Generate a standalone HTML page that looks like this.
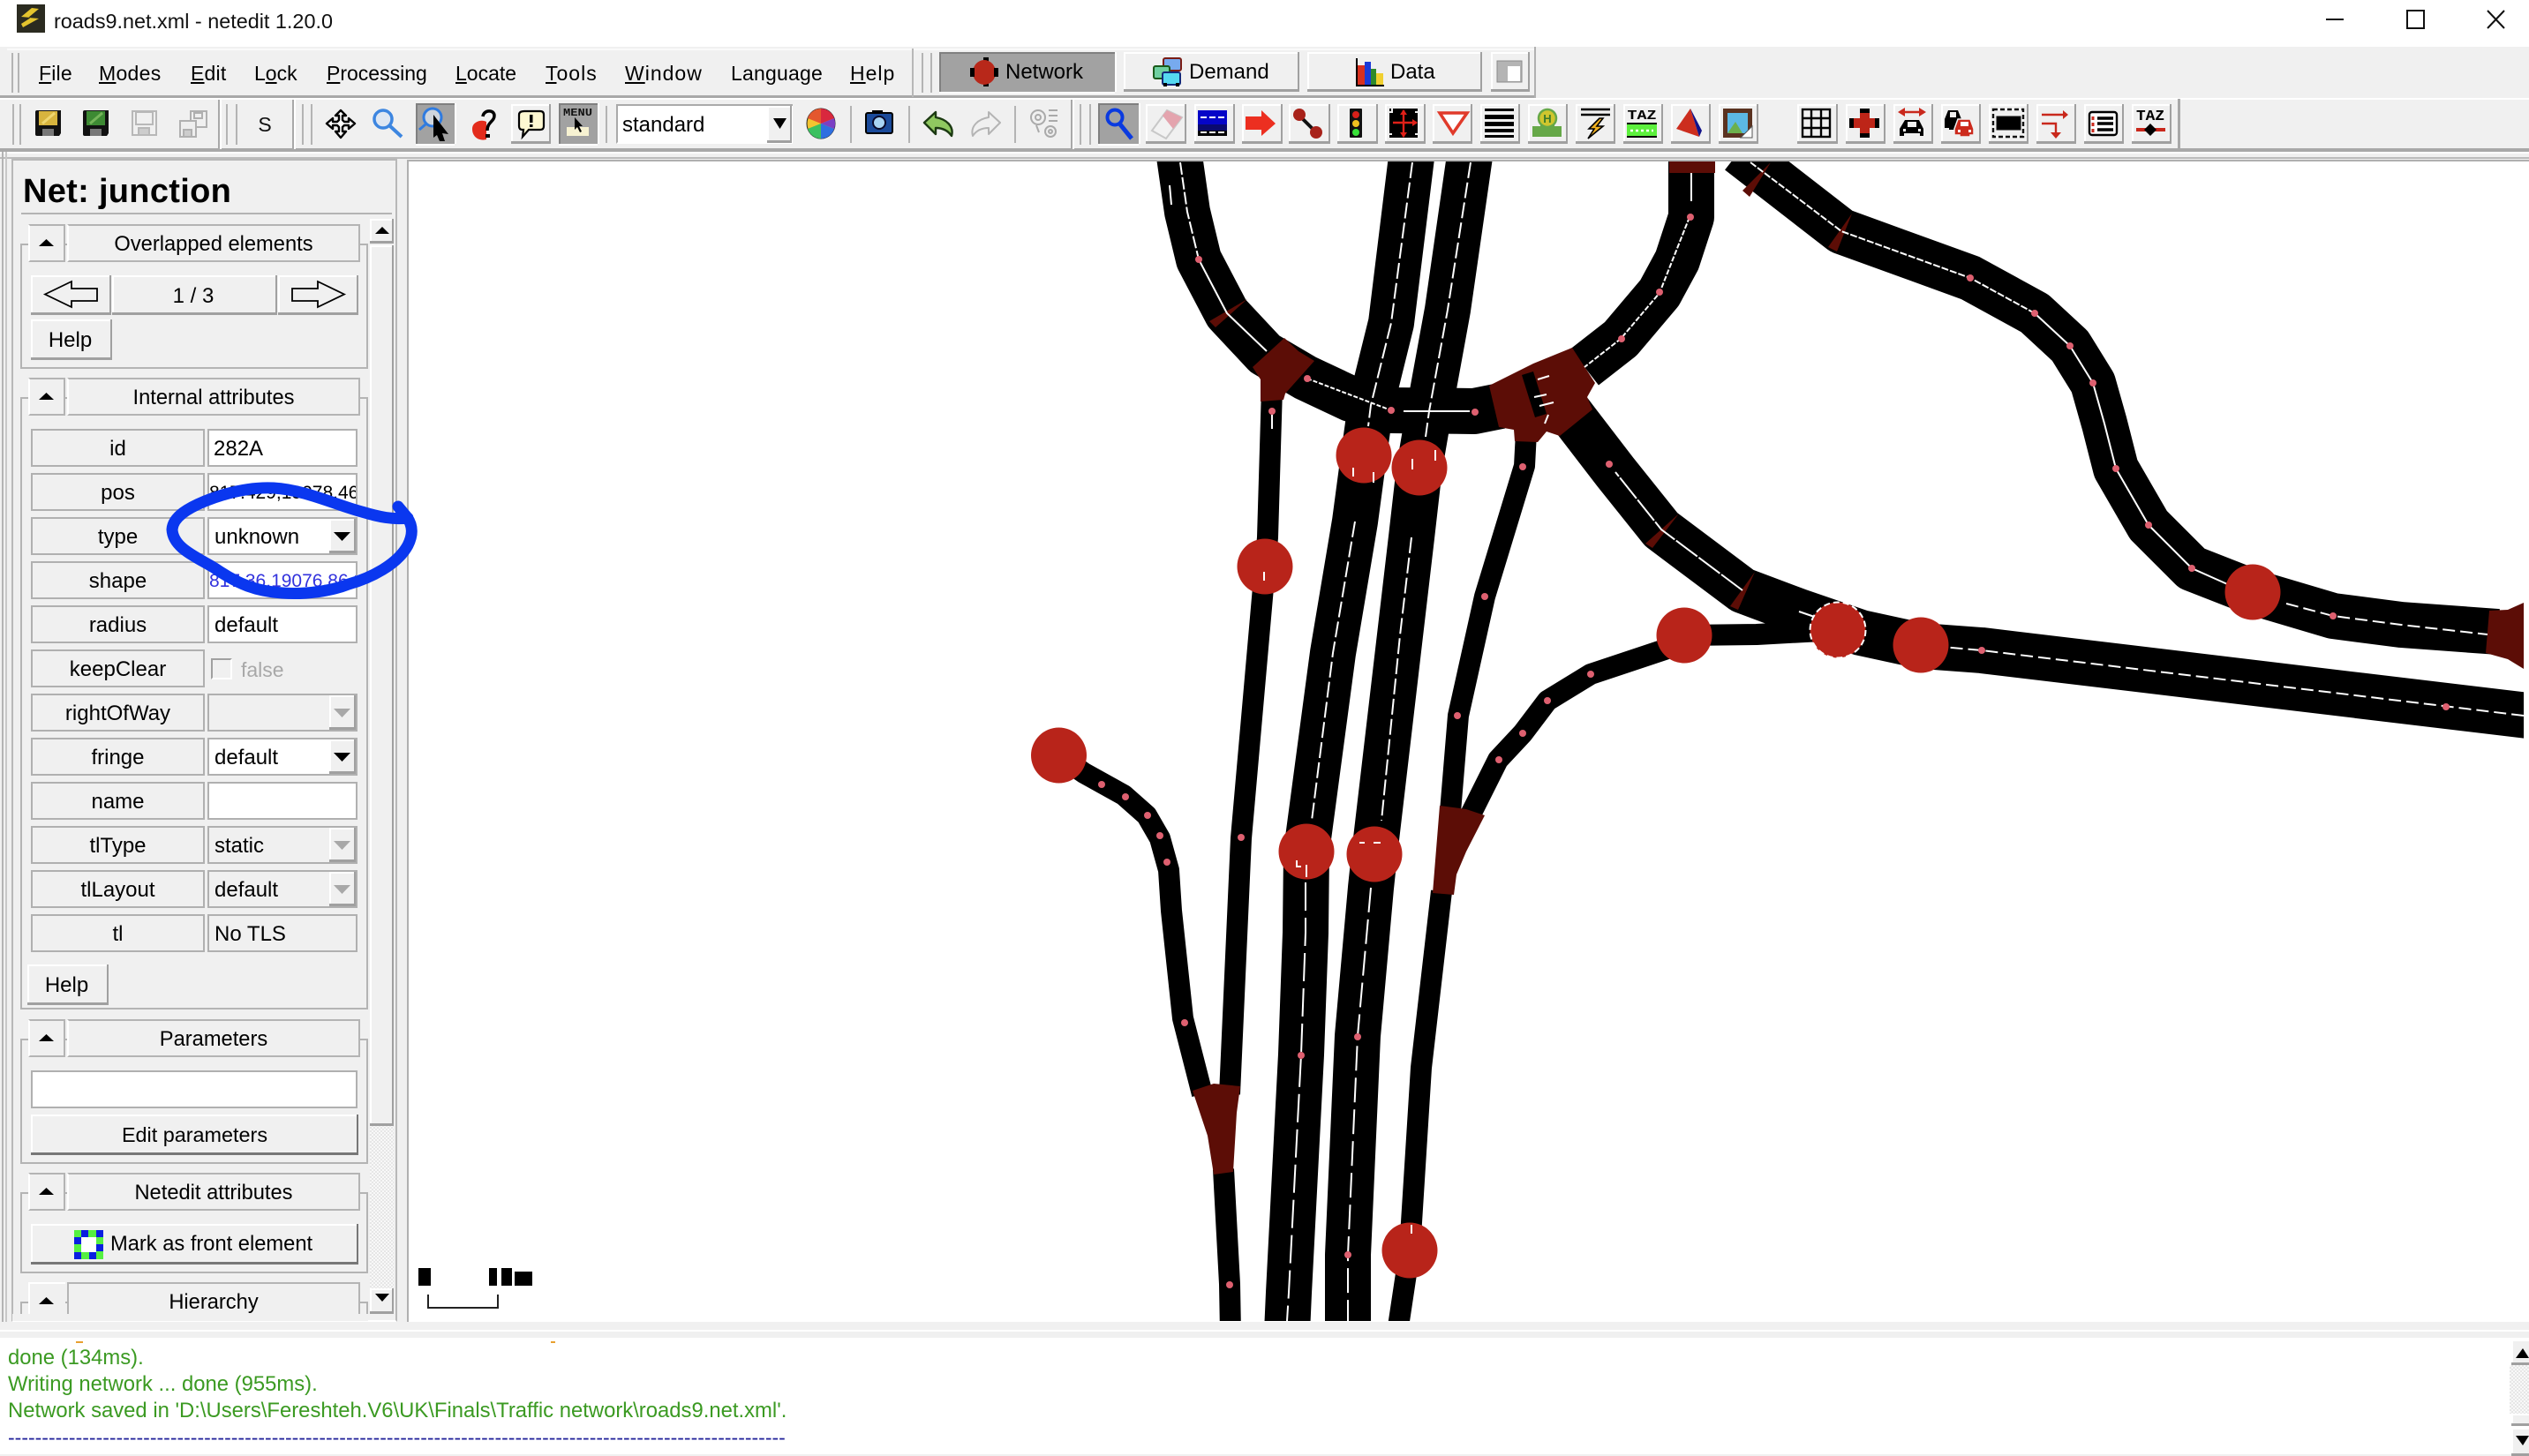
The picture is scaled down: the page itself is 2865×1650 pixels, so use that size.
<!DOCTYPE html>
<html><head><meta charset="utf-8"><title>roads9.net.xml - netedit 1.20.0</title>
<style>
html,body{margin:0;padding:0;width:2865px;height:1648px;overflow:hidden;background:#f0f0f0;font-family:"Liberation Sans",sans-serif;font-size:24px;color:#000}
.a{position:absolute;box-sizing:border-box;white-space:nowrap}
.b{position:absolute;box-sizing:border-box;background:#f0f0f0;box-shadow:inset -2px -3px 0 #a0a0a0,inset 2px 2px 0 #fff;text-align:center;white-space:nowrap}
.p{position:absolute;box-sizing:border-box;background:#a2a2a2;box-shadow:inset 2px 2px 0 #808080,0 2px 0 #fff,2px 0 0 #fff}
.h{position:absolute;box-sizing:border-box;background:#f0f0f0;border:2px solid #b4b4b4;border-left-color:#fff;border-top-color:#b4b4b4;text-align:center;white-space:nowrap;line-height:42px;font-size:23.7px}
.f{position:absolute;box-sizing:border-box;border:2px solid #b4b4b4;left:23px;width:394px}
.l{position:absolute;box-sizing:border-box;left:35px;width:197px;height:43px;border:2px solid #b0b0b0;text-align:center;line-height:42px;background:#f0f0f0}
.v{position:absolute;box-sizing:border-box;left:235px;width:170px;height:43px;border:2px solid #b0b0b0;padding-left:6px;line-height:42px;overflow:hidden;white-space:nowrap;background:#fff}
.g{background:#f0f0f0}
.m{position:absolute;top:68px;line-height:30px;font-size:23px}
.ln{position:absolute;background:#a8a8a8}
.log{position:absolute;left:9px;color:#3b9a22;line-height:30px;white-space:nowrap;font-size:23.85px}
</style></head><body>

<!-- title bar -->
<div class="a" style="left:0;top:0;width:2865px;height:53px;background:#fff"></div>
<div class="a" style="left:61px;top:8px;line-height:32px;font-size:23.4px;color:#111">roads9.net.xml - netedit 1.20.0</div>

<!-- toolbar lines -->
<div class="a" style="left:8px;top:55px;width:1730px;height:2px;background:#fafafa"></div>
<div class="ln" style="left:0;top:108px;width:1738px;height:3px"></div>
<div class="a" style="left:0;top:111px;width:2865px;height:2px;background:#fff"></div>
<div class="a" style="left:1738px;top:53px;width:2px;height:58px;background:#b0b0b0"></div>
<div class="ln" style="left:0;top:168px;width:2865px;height:4px"></div>
<div class="a" style="left:0;top:172px;width:2865px;height:2px;background:#fff"></div>
<div class="ln" style="left:0;top:178px;width:2865px;height:2px;background:#bbb"></div>
<div class="a" style="left:1033px;top:55px;width:2px;height:55px;background:#b8b8b8"></div>
<div class="a" style="left:247px;top:113px;width:2px;height:56px;background:#a8a8a8"></div>
<div class="a" style="left:249px;top:113px;width:2px;height:56px;background:#fff"></div>
<div class="a" style="left:331px;top:113px;width:2px;height:56px;background:#a8a8a8"></div>
<div class="a" style="left:333px;top:113px;width:2px;height:56px;background:#fff"></div>
<div class="a" style="left:1213px;top:113px;width:2px;height:56px;background:#a8a8a8"></div>
<div class="a" style="left:1215px;top:113px;width:2px;height:56px;background:#fff"></div>
<div class="a" style="left:2467px;top:112px;width:3px;height:57px;background:#a8a8a8"></div>
<div class="a" style="left:1215px;top:111px;width:1252px;height:2px;background:#fff"></div>

<!-- menu -->
<div class="m" style="left:44px;letter-spacing:.2px"><u>F</u>ile</div>
<div class="m" style="left:112px;letter-spacing:.3px"><u>M</u>odes</div>
<div class="m" style="left:216px;letter-spacing:.2px"><u>E</u>dit</div>
<div class="m" style="left:288px">L<u>o</u>ck</div>
<div class="m" style="left:370px"><u>P</u>rocessing</div>
<div class="m" style="left:516px"><u>L</u>ocate</div>
<div class="m" style="left:618px;letter-spacing:1px"><u>T</u>ools</div>
<div class="m" style="left:708px;letter-spacing:1px"><u>W</u>indow</div>
<div class="m" style="left:828px;letter-spacing:.2px">Language</div>
<div class="m" style="left:963px;letter-spacing:1px"><u>H</u>elp</div>

<!-- mode buttons -->
<div class="p" style="left:1064px;top:59px;width:199px;height:45px"></div>
<div class="a" style="left:1139px;top:67px;line-height:30px">Network</div>
<div class="b" style="left:1273px;top:59px;width:199px;height:45px"></div>
<div class="a" style="left:1347px;top:67px;line-height:30px">Demand</div>
<div class="b" style="left:1481px;top:59px;width:198px;height:45px"></div>
<div class="a" style="left:1575px;top:67px;line-height:30px">Data</div>
<div class="b" style="left:1689px;top:59px;width:44px;height:45px"></div>

<!-- second row buttons -->
<div class="p" style="left:471px;top:117px;width:44px;height:46px"></div>
<div class="b" style="left:579px;top:118px;width:45px;height:45px"></div>
<div class="p" style="left:633px;top:117px;width:44px;height:46px"></div>
<div class="a" style="left:698px;top:118px;width:200px;height:45px;background:#fff;border:2px solid #aaa;border-right:none;border-bottom-color:#fff;line-height:43px;padding-left:5px;font-size:24px">standard</div>
<div class="b" style="left:869px;top:120px;width:28px;height:42px"></div>
<div class="a" style="left:963px;top:120px;width:2px;height:42px;background:#b4b4b4"></div>
<div class="a" style="left:1029px;top:120px;width:2px;height:42px;background:#b4b4b4"></div>
<div class="a" style="left:1149px;top:120px;width:2px;height:42px;background:#b4b4b4"></div>
<div class="a" style="left:686px;top:120px;width:2px;height:42px;background:#b4b4b4"></div>
<div class="p" style="left:1244px;top:117px;width:46px;height:46px"></div>
<div class="b" style="left:1298px;top:118px;width:46px;height:45px"></div>
<div class="b" style="left:1353px;top:118px;width:46px;height:45px"></div>
<div class="b" style="left:1407px;top:118px;width:46px;height:45px"></div>
<div class="b" style="left:1460px;top:118px;width:47px;height:45px"></div>
<div class="b" style="left:1515px;top:118px;width:46px;height:45px"></div>
<div class="b" style="left:1569px;top:118px;width:46px;height:45px"></div>
<div class="b" style="left:1623px;top:118px;width:45px;height:45px"></div>
<div class="b" style="left:1677px;top:118px;width:45px;height:45px"></div>
<div class="b" style="left:1731px;top:118px;width:45px;height:45px"></div>
<div class="b" style="left:1785px;top:118px;width:45px;height:45px"></div>
<div class="b" style="left:1839px;top:118px;width:45px;height:45px"></div>
<div class="b" style="left:1893px;top:118px;width:45px;height:45px"></div>
<div class="b" style="left:1947px;top:118px;width:45px;height:45px"></div>
<div class="b" style="left:2036px;top:118px;width:46px;height:45px"></div>
<div class="b" style="left:2091px;top:118px;width:45px;height:45px"></div>
<div class="b" style="left:2145px;top:118px;width:45px;height:45px"></div>
<div class="b" style="left:2199px;top:118px;width:45px;height:45px"></div>
<div class="b" style="left:2253px;top:118px;width:45px;height:45px"></div>
<div class="b" style="left:2307px;top:118px;width:45px;height:45px"></div>
<div class="b" style="left:2361px;top:118px;width:45px;height:45px"></div>
<div class="b" style="left:2415px;top:118px;width:45px;height:45px"></div>

<!-- side panel frames -->
<div class="a" style="left:2px;top:172px;width:2px;height:1336px;background:#b4b4b4"></div>
<div class="a" style="left:6px;top:172px;width:2px;height:1336px;background:#c8c8c8"></div>
<div class="a" style="left:13px;top:180px;width:437px;height:1318px;border:2px solid #b8b8b8;border-bottom:2px solid #fff"></div>
<div class="a" style="left:461px;top:181px;width:2404px;height:1317px;background:#fff;border-left:2px solid #b0b0b0;border-top:2px solid #b0b0b0"></div>
<div class="a" style="left:26px;top:192px;line-height:50px;font-size:38px;font-weight:bold;letter-spacing:.3px">Net: junction</div>
<div class="a" style="left:24px;top:241px;width:420px;height:2px;background:#b4b4b4"></div>

<!-- scrollbar -->
<div class="a" style="left:419px;top:1275px;width:27px;height:185px;background:repeating-conic-gradient(#e6e6e6 0 25%,#f8f8f8 0 50%) 0 0/4px 4px"></div>
<div class="b" style="left:419px;top:248px;width:27px;height:28px"></div>
<div class="b" style="left:419px;top:278px;width:27px;height:998px"></div>
<div class="b" style="left:419px;top:1460px;width:27px;height:29px"></div>

<!-- section 1 -->
<div class="f" style="top:276px;height:142px"></div>
<div class="h" style="left:32px;top:254px;width:42px;height:43px"></div>
<div class="h" style="left:76px;top:254px;width:332px;height:43px">Overlapped elements</div>
<div class="b" style="left:35px;top:312px;width:91px;height:45px"></div>
<div class="b" style="left:127px;top:312px;width:187px;height:45px;line-height:47px;padding-right:3px">1 / 3</div>
<div class="b" style="left:315px;top:312px;width:91px;height:45px"></div>
<div class="b" style="left:35px;top:362px;width:92px;height:46px;line-height:47px;padding-right:3px">Help</div>

<!-- section 2 -->
<div class="f" style="top:450px;height:694px"></div>
<div class="h" style="left:32px;top:428px;width:42px;height:43px"></div>
<div class="h" style="left:76px;top:428px;width:332px;height:43px">Internal attributes</div>

<div class="l" style="top:486px">id</div><div class="v" style="top:486px;padding-left:5px">282A</div>
<div class="l" style="top:536px">pos</div><div class="v" style="top:536px;padding-left:0;font-size:21px">817.429,19078.46</div>
<div class="l" style="top:586px">type</div><div class="v" style="top:586px">unknown</div><div class="b" style="left:373px;top:588px;width:30px;height:39px"></div>
<div class="l" style="top:636px">shape</div><div class="v" style="top:636px;padding-left:0;font-size:21px;color:#3333dd">817.36,19076.86 817.40</div>
<div class="l" style="top:686px">radius</div><div class="v" style="top:686px">default</div>
<div class="l" style="top:736px">keepClear</div>
<div class="a" style="left:239px;top:746px;width:24px;height:24px;border:2px solid #a0a0a0;border-right-color:#fff;border-bottom-color:#fff"></div>
<div class="a" style="left:273px;top:744px;line-height:30px;color:#a8a8a8;font-size:23px">false</div>
<div class="l" style="top:786px">rightOfWay</div><div class="v g" style="top:786px"></div><div class="b" style="left:373px;top:788px;width:30px;height:39px"></div>
<div class="l" style="top:836px">fringe</div><div class="v" style="top:836px">default</div><div class="b" style="left:373px;top:838px;width:30px;height:39px"></div>
<div class="l" style="top:886px">name</div><div class="v" style="top:886px"></div>
<div class="l" style="top:936px">tlType</div><div class="v g" style="top:936px">static</div><div class="b" style="left:373px;top:938px;width:30px;height:39px"></div>
<div class="l" style="top:986px">tlLayout</div><div class="v g" style="top:986px">default</div><div class="b" style="left:373px;top:988px;width:30px;height:39px"></div>
<div class="l" style="top:1036px">tl</div><div class="v g" style="top:1036px">No TLS</div>
<div class="b" style="left:31px;top:1093px;width:92px;height:46px;line-height:47px;padding-right:3px">Help</div>

<!-- section 3 -->
<div class="f" style="top:1177px;height:142px"></div>
<div class="h" style="left:32px;top:1155px;width:42px;height:43px"></div>
<div class="h" style="left:76px;top:1155px;width:332px;height:43px;line-height:43px">Parameters</div>
<div class="a" style="left:35px;top:1213px;width:370px;height:43px;background:#fff;border:2px solid #b0b0b0"></div>
<div class="b" style="left:35px;top:1263px;width:371px;height:46px;line-height:47px;font-size:23.4px;box-shadow:inset -2px -3px 0 #777,inset 2px 2px 0 #fff">Edit parameters</div>

<!-- section 4 -->
<div class="f" style="top:1351px;height:92px"></div>
<div class="h" style="left:32px;top:1329px;width:42px;height:43px"></div>
<div class="h" style="left:76px;top:1329px;width:332px;height:43px;line-height:43px">Netedit attributes</div>
<div class="b" style="left:35px;top:1387px;width:371px;height:46px;line-height:47px;font-size:23.7px;box-shadow:inset -2px -3px 0 #777,inset 2px 2px 0 #fff;text-align:left;padding-left:90px">Mark as front element</div>

<!-- section 5 -->
<div class="a" style="left:23px;top:1475px;width:394px;height:14px;border:2px solid #b4b4b4;border-bottom:none"></div>
<div class="a" style="left:32px;top:1453px;width:42px;height:36px;background:#f0f0f0;border-top:2px solid #fff;border-left:2px solid #fff"></div>
<div class="a" style="left:76px;top:1453px;width:332px;height:36px;background:#f0f0f0;border:2px solid #b4b4b4;border-bottom:none;text-align:center;line-height:43px;font-size:23.7px">Hierarchy</div>
<div class="a" style="left:14px;top:1489px;width:403px;height:8px;background:#f0f0f0"></div>

<!-- bottom sep and log -->
<div class="a" style="left:0;top:1498px;width:2865px;height:18px;background:#f0f0f0"></div>
<div class="a" style="left:0;top:1507px;width:2865px;height:2px;background:#fff"></div>
<div class="a" style="left:0;top:1516px;width:2865px;height:132px;background:#fff"></div>
<div class="log" style="top:1524px">done (134ms).</div>
<div class="log" style="top:1554px">Writing network ... done (955ms).</div>
<div class="log" style="top:1584px">Network saved in 'D:\Users\Fereshteh.V6\UK\Finals\Traffic network\roads9.net.xml'.</div>
<div class="log" style="top:1614px;color:#22229a;font-size:23px">-------------------------------------------------------------------------------------------------------------------</div>
<div class="a" style="left:86px;top:1520px;width:8px;height:2px;background:#e8a030"></div>
<div class="a" style="left:624px;top:1520px;width:5px;height:2px;background:#e8a030"></div>
<div class="a" style="left:2843px;top:1547px;width:22px;height:55px;background:repeating-conic-gradient(#e6e6e6 0 25%,#f8f8f8 0 50%) 0 0/4px 4px"></div>
<div class="b" style="left:2845px;top:1518px;width:22px;height:29px"></div>
<div class="b" style="left:2845px;top:1602px;width:22px;height:14px"></div>
<div class="b" style="left:2845px;top:1618px;width:22px;height:32px"></div>

<!-- overlay: roads, icons, annotation -->
<svg class="a" style="left:0;top:0" width="2865" height="1648" viewBox="0 0 2865 1648">
<defs><clipPath id="cv"><rect x="463" y="183" width="2396" height="1314"/></clipPath></defs>

<!-- canvas -->
<g clip-path="url(#cv)">
 <g fill="none" stroke="#000" stroke-linejoin="round">
  <g stroke-width="52">
   <path d="M2880 813L2245 737 2177 732 2108 717 2038 693 1974 669 1882 600 1830 535 1787 479 1765 450"/>
   <path d="M1970 172L2086 262 2232 315 2305 355 2345 392 2371 434 2384 480 2397 531 2434 595 2483 644 2552 671 2643 698 2720 708 2830 716"/>
   <path d="M1335 170L1345 240 1358 294 1390 355 1433 401 1479 428 1530 452 1576 465 1670 466 1700 460"/>
   <path d="M1916 170L1916 246 1900 295 1880 332 1836 384 1795 416"/>
   <path d="M1600 170L1576 366 1553 459 1545 516 1535 591 1510 740 1480 965 1479 1057 1474 1195 1460 1465 1458 1510"/>
   <path d="M1666 170L1640 351 1619 466 1608 530 1599 609 1586 720 1557 968 1553 1006 1538 1174 1527 1422 1527 1510"/>
  </g>
  <g stroke-width="24">
   <path d="M1441 440L1436 609 1428 700 1406 950 1393 1240"/>
   <path d="M1386 1325L1393 1455 1394 1510"/>
   <path d="M1199 856L1228 876 1273 901 1299 924 1314 950 1324 986 1327 1032 1340 1154 1362 1240"/>
   <path d="M1729 490L1727 528 1682 676 1652 811 1643 920"/>
   <path d="M1633 1010L1610 1210 1597 1417 1583 1510"/>
   <path d="M1665 925L1697 861 1725 831 1753 794 1802 764 1886 736 1908 720 1990 719 2082 714"/>
  </g>
 </g>
 <g fill="#5c0d06">
  <polygon points="1455,383 1471,398 1489,409 1456,446 1454,453 1428,455 1428,430 1419,416"/>
  <polygon points="1687,437 1737,412 1781,394 1807,434 1798,450 1804,464 1767,494 1752,489 1742,501 1716,500 1715,487 1698,484"/>
  <polygon points="1351,1236 1375,1228 1405,1231 1401,1261 1397,1328 1375,1331 1368,1287"/>
  <polygon points="1631,913 1661,917 1682,924 1661,965 1650,991 1647,1014 1623,1012"/>
  <rect x="1891" y="183" width="52" height="13"/>
  <polygon points="2820,692 2841,691 2859,683 2859,758 2841,747 2816,740"/>
  <polygon points="1413,339 1370,364 1377,371"/>
  <polygon points="1902,582 1864,616 1872,621"/>
  <polygon points="2006,184 1974,216 1982,223"/>
  <polygon points="2098,242 2071,280 2081,285"/>
  <polygon points="1988,648 1960,687 1969,691"/>
 </g>
 <polygon points="1724,425 1737,421 1752,469 1739,473" fill="#000"/>
 <g fill="none" stroke="#fff" stroke-width="2">
  <path stroke-dasharray="14 6" d="M2859 811L2245 737 2177 731"/>
  <path d="M2108 717L2038 693"/>
  <path stroke-dasharray="30 2" d="M1974 669L1882 600 1830 535"/>
  <path stroke-dasharray="8 2" d="M1983 184L2086 262 2232 315 2305 355"/>
  <path d="M2305 355L2345 392 2371 434 2384 480 2397 531 2434 595 2483 644 2530 665"/>
  <path stroke-dasharray="14 6" d="M2590 684L2643 698 2720 708 2818 719"/>
  <path stroke-dasharray="14 3" d="M1337 184L1345 240 1358 294"/>
  <path d="M1358 294L1390 355 1435 398"/>
  <path stroke-dasharray="5 2" d="M1481 429L1576 465"/>
  <path d="M1590 466L1665 466"/>
  <path d="M1916 196L1916 228"/>
  <path stroke-dasharray="6 2" d="M1914 246L1880 332 1836 384 1795 416"/>
  <path stroke-dasharray="18 5" d="M1600 184L1576 366 1553 459 1550 483"/>
  <path stroke-dasharray="18 5" d="M1535 591L1510 740 1486 930"/>
  <path stroke-dasharray="32 8" d="M1479 1000L1479 1057 1474 1195 1460 1465 1458 1497"/>
  <path stroke-dasharray="18 5" d="M1666 184L1640 351 1619 466 1615 495"/>
  <path stroke-dasharray="18 5" d="M1599 609L1586 720 1565 930"/>
  <path stroke-dasharray="28 8" d="M1553 1006L1538 1174 1527 1422 1527 1497"/>
  <path d="M1742 430L1755 426M1738 450L1752 447M1744 460L1760 456M1754 470L1750 480M1325 210L1327 232M1441 470L1441 486"/>
 </g>
 <g fill="#b8241a">
  <circle cx="1545" cy="516" r="31.5"/><circle cx="1608" cy="530" r="31.5"/>
  <circle cx="1433" cy="642" r="31.5"/><circle cx="1199.5" cy="856" r="31.5"/>
  <circle cx="1480" cy="965" r="31.5"/><circle cx="1557" cy="968" r="31.5"/>
  <circle cx="1597" cy="1417" r="31.5"/><circle cx="1908" cy="720" r="31.5"/>
  <circle cx="2082" cy="714" r="31.5" stroke="#fff" stroke-width="2" stroke-dasharray="7 4"/><circle cx="2176" cy="731" r="31.5"/>
  <circle cx="2552" cy="671" r="31.5"/>
 </g>
 <g fill="none" stroke="#fff" stroke-width="2">
  <path d="M1480 980V994M1469 975V982h5M1600 520v12M1626 510v12M1533 530v10M1556 535v12M1432 648v10M1599 1388v10M1556 955h8M1540 955h6"/>
 </g>
 <g fill="#de6070">
  <circle cx="1358" cy="294" r="4"/><circle cx="1481" cy="429" r="4"/><circle cx="1441" cy="466" r="4"/>
  <circle cx="1576" cy="465" r="4"/><circle cx="1671" cy="467" r="4"/><circle cx="1915" cy="246" r="4"/>
  <circle cx="1880" cy="331" r="4"/><circle cx="1837" cy="384" r="4"/><circle cx="1725" cy="529" r="4"/>
  <circle cx="1823" cy="526" r="4"/><circle cx="1682" cy="676" r="4"/><circle cx="1248" cy="889" r="4"/>
  <circle cx="1275" cy="903" r="4"/><circle cx="1300" cy="924" r="4"/><circle cx="1314" cy="947" r="4"/>
  <circle cx="1322" cy="977" r="4"/><circle cx="1406" cy="949" r="4"/><circle cx="1342" cy="1159" r="4"/>
  <circle cx="1474" cy="1196" r="4"/><circle cx="1538" cy="1175" r="4"/><circle cx="1527" cy="1422" r="4"/>
  <circle cx="1393" cy="1456" r="4"/><circle cx="1651" cy="811" r="4"/><circle cx="1698" cy="861" r="4"/>
  <circle cx="1725" cy="831" r="4"/><circle cx="1753" cy="794" r="4"/><circle cx="1802" cy="764" r="4"/>
  <circle cx="2232" cy="315" r="4"/><circle cx="2305" cy="355" r="4"/><circle cx="2345" cy="392" r="4"/>
  <circle cx="2371" cy="434" r="4"/><circle cx="2397" cy="531" r="4"/><circle cx="2434" cy="595" r="4"/>
  <circle cx="2483" cy="644" r="4"/><circle cx="2643" cy="698" r="4"/><circle cx="2245" cy="737" r="4"/>
  <circle cx="2771" cy="801" r="4"/>
 </g>
</g>

<!-- scale -->
<g fill="#000">
 <rect x="474" y="1437" width="14" height="20"/><rect x="554" y="1437" width="9" height="20"/>
 <rect x="568" y="1437" width="12" height="20"/><rect x="583" y="1441" width="20" height="16"/>
</g>
<path d="M485 1467V1482H564V1467" fill="none" stroke="#222" stroke-width="2"/>

<!-- window controls -->
<path d="M2635 22H2655" stroke="#111" stroke-width="2"/>
<rect x="2727" y="12" width="19" height="20" fill="none" stroke="#111" stroke-width="2"/>
<path d="M2818 12L2837 32M2837 12L2818 32" stroke="#111" stroke-width="2"/>

<!-- app icon -->
<rect x="19" y="5" width="32" height="32" fill="#2b2b20"/>
<path d="M26 31L44 21 32 20 44 10 36 9 24 19 35 20 24 27Z" fill="#e4c42e"/>

<!-- grips -->
<g stroke="#b4b4b4" stroke-width="2" fill="none">
 <path d="M14 60V105M21 60V105M15 118V164M23 118V164M257 118V164M268 118V164M343 118V164M353 118V164M1045 60V105M1055 60V105M1224 118V164M1235 118V164"/>
</g>

<!-- row1 icons -->
<g>
 <path d="M1108 72h6v-7h6v7h4v20h-4v6h-6v-6h-6z" fill="#000"/>
 <ellipse cx="1115" cy="82" rx="13" ry="14" fill="#b8281a"/>
 <rect x="1099" y="77" width="5" height="10" fill="#000"/><rect x="1126" y="77" width="5" height="10" fill="#000"/>
</g>
<g>
 <rect x="1318" y="66" width="20" height="14" rx="2" fill="#7ae" stroke="#7a1c14" stroke-width="2"/>
 <rect x="1307" y="75" width="18" height="14" rx="2" fill="#6fd0a0" stroke="#1a5a1a" stroke-width="2"/>
 <rect x="1317" y="82" width="20" height="14" rx="2" fill="#55d8f0" stroke="#122a7a" stroke-width="2"/>
 <rect x="1318" y="94" width="4" height="4" fill="#000"/><rect x="1332" y="94" width="4" height="4" fill="#000"/>
</g>
<g>
 <path d="M1537 66V97H1568" fill="none" stroke="#000" stroke-width="2"/>
 <rect x="1538" y="74" width="8" height="22" fill="#d8301f"/><rect x="1546" y="70" width="7" height="26" fill="#1a3ad8"/>
 <rect x="1553" y="78" width="6" height="18" fill="#2e8a2a"/><rect x="1559" y="83" width="8" height="13" fill="#f0d030"/>
</g>
<rect x="1696" y="69" width="28" height="24" fill="#b4b4b4" stroke="#8a8a8a" stroke-width="1"/>
<rect x="1708" y="75" width="14" height="17" fill="#fff"/>

<!-- save icons -->
<g transform="translate(40,125)">
 <path d="M0 2Q0 0 2 0H29V26L27 29H2Q0 29 0 27Z" fill="#111"/><rect x="4" y="1" width="21" height="16" fill="#d7b43e"/><path d="M8 15L22 3" stroke="#eed670" stroke-width="3"/><rect x="8" y="21" width="13" height="8" fill="#777"/>
</g>
<g transform="translate(94,125)">
 <path d="M0 2Q0 0 2 0H29V26L27 29H2Q0 29 0 27Z" fill="#111"/><rect x="4" y="1" width="21" height="16" fill="#3d8a33"/><path d="M8 15L22 3" stroke="#75b55a" stroke-width="3"/><rect x="8" y="21" width="13" height="8" fill="#777"/>
</g>
<g transform="translate(149,125)" fill="none" stroke="#b8b8b8" stroke-width="2">
 <rect x="1" y="1" width="27" height="27"/><rect x="5" y="2" width="19" height="14"/><rect x="8" y="20" width="12" height="8" fill="#ccc"/>
</g>
<g transform="translate(203,125)" fill="none" stroke="#b0b0b0" stroke-width="2">
 <rect x="13" y="1" width="18" height="18"/><rect x="1" y="12" width="18" height="18" fill="#eee"/><rect x="5" y="22" width="9" height="8" fill="#ccc"/><rect x="17" y="3" width="9" height="6"/>
</g>
<text x="300" y="149" font-family="Liberation Sans" font-size="23" text-anchor="middle" fill="#111">S</text>

<!-- recenter -->
<g transform="translate(386,140)" fill="#fff" stroke="#000" stroke-width="2.4" stroke-linejoin="round">
 <path d="M0 -15L-6 -9H-2V-4L-4 -2 -9 -2V-6L-16 0 -9 6V2H-4L-2 4V9H-6L0 16 6 9H2V4L4 2H9V6L16 0 9 -6V-2H4L2 -4V-9H6Z"/>
</g>
<!-- magnifier -->
<g fill="none">
 <circle cx="434" cy="135" r="10" fill="#dfe7f2" stroke="#3d86e0" stroke-width="3.5"/>
 <path d="M442 143L455 155" stroke="#3d86e0" stroke-width="4"/>
</g>
<g>
 <circle cx="490" cy="133" r="10" fill="#cfd5dc" stroke="#2f7be0" stroke-width="3"/>
 <path d="M482 141L475 147" stroke="#2f7be0" stroke-width="3"/>
 <path d="M491 130L508 152 501 151 504 160 498 160 495 153 491 156Z" fill="#000"/>
</g>
<!-- bug -->
<g>
 <path d="M535 146C535 137 547 135 551 138L551 158C545 160 535 157 535 146Z" fill="#e32c1c"/>
 <path d="M547 132C548 124 560 124 560 131 560 138 552 138 552 148" fill="none" stroke="#000" stroke-width="3.5"/>
 <rect x="550" y="152" width="5" height="4" fill="#000"/>
</g>
<!-- bubble -->
<g>
 <path d="M594 126H612Q616 126 616 130V143Q616 147 612 147H599L592 155 593 147H592Q588 147 588 143V130Q588 126 594 126Z" fill="#fdf8d2" stroke="#000" stroke-width="2.2"/>
 <rect x="600" y="130" width="3.5" height="9" fill="#000"/><rect x="600" y="141" width="3.5" height="3" fill="#000"/>
</g>
<!-- menu icon -->
<text x="638" y="131" font-family="Liberation Mono" font-weight="bold" font-size="12" textLength="33" lengthAdjust="spacingAndGlyphs" fill="#111">MENU</text>
<rect x="642" y="144" width="25" height="10" fill="#f7f2d2"/>
<path d="M651 133L651 147 654 144 657 150 659 149 656 143 660 143Z" fill="#000"/>
<!-- combo arrow -->
<polygon points="876,134 891,134 883.5,146" fill="#000"/>
<!-- color wheel -->
<g transform="translate(930,140)">
 <ellipse rx="16" ry="17" fill="#f4c430" stroke="#222" stroke-width="1"/>
 <path d="M0 0L-15 -6A16 17 0 0 1 0 -17Z" fill="#e4572e"/><path d="M0 0V-17A16 17 0 0 1 15 -6Z" fill="#d9283e"/>
 <path d="M0 0L15 -6A16 17 0 0 1 15 6Z" fill="#7b3fc4"/><path d="M0 0L15 6A16 17 0 0 1 0 17Z" fill="#2f6fe0"/>
 <path d="M0 0V17A16 17 0 0 1 -15 6Z" fill="#3cc060"/>
</g>
<!-- camera -->
<g>
 <rect x="981" y="128" width="30" height="23" rx="2" fill="#1a4a9a" stroke="#000" stroke-width="2"/>
 <circle cx="996" cy="139" r="7" fill="#a8d4f4" stroke="#0a0a2a" stroke-width="2"/>
 <rect x="988" y="125" width="12" height="4" fill="#000"/>
</g>
<!-- undo / redo / gear -->
<path d="M1047 139L1060 127V133C1072 135 1081 143 1078 154 1074 148 1068 145 1060 145V152Z" fill="#8fc860" stroke="#1c3a12" stroke-width="2.4" stroke-linejoin="round"/>
<path d="M1133 139L1120 127V133C1108 135 1099 143 1102 154 1106 148 1112 145 1120 145V152Z" fill="none" stroke="#b4b4b4" stroke-width="2" stroke-linejoin="round"/>
<g fill="none" stroke="#aaa" stroke-width="2">
 <circle cx="1176" cy="133" r="8"/><circle cx="1176" cy="133" r="3"/><circle cx="1190" cy="149" r="6"/><circle cx="1190" cy="149" r="2"/>
 <path d="M1188 125h10M1188 131h10M1188 137h10M1174 142l3 8"/>
</g>
<!-- inspect magnifier -->
<g fill="none" stroke="#0a3ae0">
 <circle cx="1263" cy="133" r="8.5" stroke-width="4"/><path d="M1269 141L1282 157" stroke-width="5"/>
</g>
<!-- eraser -->
<g>
 <path d="M1305 148L1322 125 1339 133 1321 157Z" fill="#f2f2f2" stroke="#c8c8c8" stroke-width="2"/>
 <path d="M1317 131L1322 125 1339 133 1329 146Z" fill="#e4a4ae"/>
</g>
<!-- lanes -->
<g>
 <rect x="1357" y="125" width="33" height="23" fill="#0505c8"/>
 <rect x="1357" y="148" width="33" height="6" fill="#000"/>
 <rect x="1357" y="141" width="33" height="7" fill="#0a0a70"/>
 <path d="M1360 133h7M1370 133h7M1380 133h7" stroke="#fff" stroke-width="2"/>
 <path d="M1360 150h7M1370 150h7M1380 150h7" stroke="#fff" stroke-width="2"/>
</g>
<polygon points="1411,132 1429,132 1429,125 1445,140 1429,154 1429,147 1411,147" fill="#ec2f20"/>
<g><path d="M1472 131L1491 150" stroke="#111" stroke-width="4"/><circle cx="1472" cy="130" r="7" fill="#a8221a"/><circle cx="1491" cy="150" r="7" fill="#a8221a"/></g>
<g>
 <rect x="1529" y="123" width="14" height="33" rx="1" fill="#111"/>
 <circle cx="1536" cy="130" r="4" fill="#d8201a"/><circle cx="1536" cy="140" r="4" fill="#f0c020"/><circle cx="1536" cy="150" r="4" fill="#38e038"/>
</g>
<g>
 <rect x="1574" y="123" width="32" height="33" fill="#000"/>
 <path d="M1574 127h3v-4M1606 127h-3M1574 152h3M1606 152h-3" stroke="#f0f0f0" stroke-width="2" fill="none"/>
 <path d="M1590 125V155M1578 139H1605" stroke="#e02018" stroke-width="2.4"/>
 <path d="M1586 130l4-6 4 6zM1586 150l4 6 4-6zM1600 135l6 4-6 4z" fill="#e02018"/>
</g>
<polygon points="1631,128 1662,128 1646,151" fill="#fff" stroke="#e03a2a" stroke-width="3.5"/>
<g fill="#000">
 <rect x="1682" y="123" width="33" height="3"/><rect x="1682" y="130" width="33" height="5"/>
 <rect x="1682" y="138" width="33" height="5"/><rect x="1682" y="146" width="33" height="4"/><rect x="1682" y="153" width="33" height="3"/>
</g>
<g>
 <rect x="1736" y="143" width="33" height="12" fill="#66a848"/>
 <rect x="1745" y="130" width="16" height="16" fill="#66a848"/>
 <circle cx="1753" cy="134" r="10" fill="#cfc62e" stroke="#66a848" stroke-width="2.5"/>
 <text x="1753" y="139" font-family="Liberation Sans" font-size="13" font-weight="bold" text-anchor="middle" fill="#3a7a2a">H</text>
</g>
<g>
 <path d="M1791 124h33M1791 130h33" stroke="#000" stroke-width="2.4"/>
 <path d="M1812 134L1800 146H1806L1799 157 1816 143H1809L1816 134Z" fill="#f0b020" stroke="#000" stroke-width="1.6"/>
</g>
<g>
 <text x="1860" y="135" font-family="Liberation Mono" font-size="15" font-weight="bold" text-anchor="middle" textLength="33" lengthAdjust="spacingAndGlyphs" fill="#000">TAZ</text>
 <rect x="1843" y="141" width="34" height="13" fill="#5cf03c"/>
 <path d="M1843 140h34M1843 155h34" stroke="#000" stroke-width="2"/>
 <path d="M1847 148h26" stroke="#fff" stroke-width="2.4" stroke-dasharray="3 3"/>
</g>
<g>
 <polygon points="1915,123 1899,146 1925,155" fill="#cc2d1e"/>
 <polygon points="1915,123 1928,148 1925,155" fill="#12128a"/>
</g>
<g>
 <rect x="1952" y="123" width="33" height="33" fill="#5a3220"/>
 <rect x="1957" y="128" width="23" height="23" fill="#5cb8e4"/>
 <path d="M1957 151L1966 138 1974 151Z" fill="#6cb04c"/>
 <path d="M1972 156L1985 143V156Z" fill="#fff" stroke="#555" stroke-width="1"/>
</g>
<!-- grid -->
<g fill="none" stroke="#000" stroke-width="2.4">
 <rect x="2042" y="124" width="31" height="31"/><path d="M2052 124V155M2063 124V155M2042 134H2073M2042 145H2073"/>
</g>
<g>
 <path d="M2107 123h11v11h10v11h-10v11h-11v-11h-10v-11h10z" fill="#bd2518"/>
 <rect x="2107" y="123" width="11" height="5" fill="#000"/><rect x="2107" y="151" width="11" height="5" fill="#000"/>
 <rect x="2095" y="134" width="5" height="11" fill="#000"/><rect x="2124" y="134" width="5" height="11" fill="#000"/>
</g>
<g>
 <path d="M2152 127H2180" stroke="#c9281c" stroke-width="2.4"/><path d="M2158 122L2150 127 2158 132zM2174 122L2182 127 2174 132z" fill="#c9281c"/>
 <path d="M2158 136H2174L2179 146V154H2175V151H2157V154H2152V146Z" fill="#000"/>
 <rect x="2161" y="138" width="10" height="6" fill="#f0f0f0"/>
 <rect x="2156" y="146" width="3" height="3" fill="#fff"/><rect x="2173" y="146" width="3" height="3" fill="#fff"/>
</g>
<g>
 <path d="M2207 125H2218L2222 135V145H2218V147H2208V145H2203V135Z" fill="#000"/>
 <rect x="2209" y="127" width="7" height="6" fill="#f0f0f0"/>
 <path d="M2218 135H2232L2236 146V153H2232V155H2220V153H2214V146Z" fill="#cc2a1c" stroke="#f0f0f0" stroke-width="1.5"/>
 <rect x="2221" y="138" width="9" height="5" fill="#fff"/>
 <rect x="2218" y="147" width="3" height="3" fill="#fff"/><rect x="2230" y="147" width="3" height="3" fill="#fff"/>
</g>
<g fill="none" stroke="#111">
 <rect x="2258" y="124" width="34" height="31" stroke-width="2.4" stroke-dasharray="5 3"/>
 <rect x="2262" y="132" width="27" height="15" fill="#000"/>
</g>
<g>
 <path d="M2313 130H2339" stroke="#c9281c" stroke-width="2.4"/><path d="M2337 125L2343 130 2337 135z" fill="#c9281c"/>
 <path d="M2313 140H2329V153" stroke="#c9281c" stroke-width="2.4" fill="none"/><path d="M2323 150L2329 157 2335 150z" fill="#c9281c"/>
</g>
<g>
 <rect x="2367" y="127" width="31" height="26" rx="3" fill="#fff" stroke="#000" stroke-width="2.4"/>
 <path d="M2371 132v4M2371 139v4M2371 146v4" stroke="#cc2a1c" stroke-width="3"/>
 <path d="M2376 134H2394M2376 140H2394M2376 147H2394" stroke="#000" stroke-width="3.6"/>
</g>
<g>
 <text x="2436" y="136" font-family="Liberation Mono" font-size="17" font-weight="bold" text-anchor="middle" textLength="32" lengthAdjust="spacingAndGlyphs" fill="#000">TAZ</text>
 <rect x="2420" y="145" width="33" height="4" fill="#c9281c"/>
 <path d="M2436 140L2443 147 2436 154 2429 147Z" fill="#000"/>
</g>

<!-- panel triangles -->
<g fill="#000">
 <polygon points="44,279 61,279 52.5,271"/><polygon points="44,453 61,453 52.5,445"/>
 <polygon points="44,1180 61,1180 52.5,1172"/><polygon points="44,1354 61,1354 52.5,1346"/>
 <polygon points="44,1478 61,1478 52.5,1470"/>
 <polygon points="425,265 441,265 433,257"/><polygon points="425,1466 441,1466 433,1475"/>
 <polygon points="2850,1539 2865,1539 2858,1528"/><polygon points="2850,1627 2865,1627 2858,1638"/>
 <polygon points="378,603 397,603 387.5,613"/><polygon points="378,853 397,853 387.5,863"/>
</g>
<g fill="#a8a8a8">
 <polygon points="378,803 397,803 387.5,813"/><polygon points="378,953 397,953 387.5,963"/><polygon points="378,1003 397,1003 387.5,1013"/>
</g>
<polygon points="51,333.5 81,319 81,327 110,327 110,341 81,341 81,348" fill="none" stroke="#000" stroke-width="1.8"/>
<polygon points="390,333.5 360,319 360,327 331,327 331,341 360,341 360,348" fill="none" stroke="#000" stroke-width="1.8"/>

<!-- mark icon -->
<g>
 <rect x="84" y="1394" width="33" height="33" fill="#55f040"/>
 <rect x="92" y="1402" width="17" height="17" fill="#fff"/>
 <g fill="#0a1ee0"><rect x="84" y="1402" width="8" height="8"/><rect x="84" y="1419" width="8" height="8"/><rect x="92" y="1394" width="8" height="8"/><rect x="101" y="1419" width="8" height="8"/><rect x="109" y="1394" width="8" height="8"/><rect x="109" y="1410" width="8" height="8"/></g>
</g>

<!-- blue annotation -->
<path d="M451 574L461 586C468 596,468 606,462 618C450 640,420 655,395 662C375 670,345 674,320 672C290 670,270 662,245 645C225 632,196 622,195 600C196 585,215 575,232 568C265 555,290 552,310 553C345 555,380 572,410 580C430 586,445 589,462 587" fill="none" stroke="#0a37ef" stroke-width="13" stroke-linecap="round" stroke-linejoin="round"/>
</svg>
</body></html>
